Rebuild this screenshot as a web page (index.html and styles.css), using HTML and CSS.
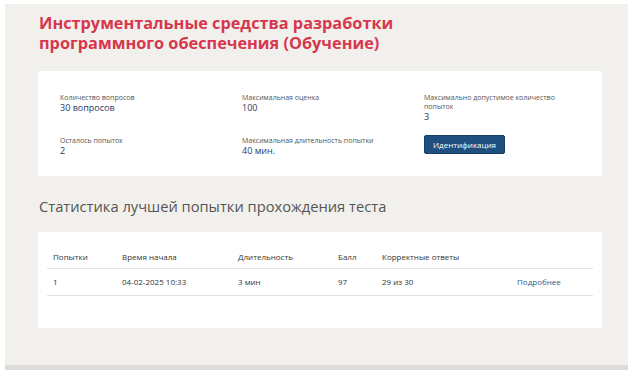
FILE: index.html
```html
<!DOCTYPE html>
<html lang="ru">
<head>
<meta charset="utf-8">
<title>Тест</title>
<link rel="stylesheet" href="styles.css">
</head>
<body>
<div class="page">
  <h1 class="title">Инструментальные средства разработки<br>программного обеспечения (Обучение)</h1>
  <div class="card info">
    <div class="item">
      <div class="label">Количество вопросов</div>
      <div class="value">30 вопросов</div>
    </div>
    <div class="item">
      <div class="label">Максимальная оценка</div>
      <div class="value">100</div>
    </div>
    <div class="item narrow">
      <div class="label">Максимально допустимое количество попыток</div>
      <div class="value">3</div>
    </div>
    <div class="item">
      <div class="label">Осталось попыток</div>
      <div class="value">2</div>
    </div>
    <div class="item">
      <div class="label">Максимальная длительность попытки</div>
      <div class="value">40 мин.</div>
    </div>
    <div class="item">
      <button class="btn">Идентификация</button>
    </div>
  </div>
  <h2 class="subtitle">Статистика лучшей попытки прохождения теста</h2>
  <div class="card stats">
    <table class="table">
      <colgroup>
        <col class="c1"><col class="c2"><col class="c3"><col class="c4"><col class="c5"><col>
      </colgroup>
      <thead>
        <tr><th>Попытки</th><th>Время начала</th><th>Длительность</th><th>Балл</th><th>Корректные ответы</th><th></th></tr>
      </thead>
      <tbody>
        <tr><td>1</td><td>04-02-2025 10:33</td><td>3 мин</td><td>97</td><td>29 из 30</td><td><a class="link" href="#">Подробнее</a></td></tr>
      </tbody>
    </table>
  </div>
</div>
</body>
</html>
```
FILE: styles.css
```css
html, body {
  margin: 0;
  padding: 0;
  background: #ffffff;
}
body {
  font-family: "Open Sans", "Noto Sans", sans-serif;
}
.page {
  margin: 4px 1px 10px 5px;
  background: #f2f0ed;
  padding: 9px 26px 37px 33px;
  border-bottom: 5px solid #dcdbd6;
}
.title {
  margin: 0 0 18px 1px;
  font-size: 16.3px;
  line-height: 20px;
  font-weight: 700;
  color: #d7374d;
}
.card {
  background: #ffffff;
  border-radius: 2px;
}
.info {
  display: grid;
  grid-template-columns: 182px 182px 1fr;
  row-gap: 14px;
  padding: 22px 22px 20px 22px;
}
.label {
  font-size: 7px;
  line-height: 9px;
  color: #555555;
}
.narrow .label {
  max-width: 150px;
}
.value {
  font-size: 9px;
  line-height: 11px;
  color: #1f3a5f;
}
.btn {
  display: block;
  width: 81px;
  height: 19px;
  margin-top: -1px;
  padding: 0;
  border: 1px solid #173f66;
  border-radius: 2px;
  background: #1e4f7e;
  color: #ffffff;
  font-family: "Open Sans", "Noto Sans", sans-serif;
  font-size: 8px;
  line-height: 17px;
}
.subtitle {
  margin: 20px 0 16px 1px;
  font-size: 14.7px;
  line-height: 20px;
  font-weight: 400;
  color: #555555;
}
.stats {
  padding: 13px 9px 32px 9px;
}
.table {
  width: 100%;
  border-collapse: collapse;
  table-layout: fixed;
  font-size: 8px;
  color: #333333;
}
.c1 { width: 69px; }
.c2 { width: 116px; }
.c3 { width: 100px; }
.c4 { width: 44px; }
.c5 { width: 135px; }
.table th {
  text-align: left;
  font-weight: 400;
  padding: 7px 6px 6px;
  line-height: 10px;
  border-bottom: 1px solid #e3e3e3;
}
.table td {
  padding: 8px 6px 8px;
  line-height: 10px;
  border-bottom: 1px solid #e3e3e3;
}
.link {
  color: #2b5d90;
  text-decoration: none;
}
```
